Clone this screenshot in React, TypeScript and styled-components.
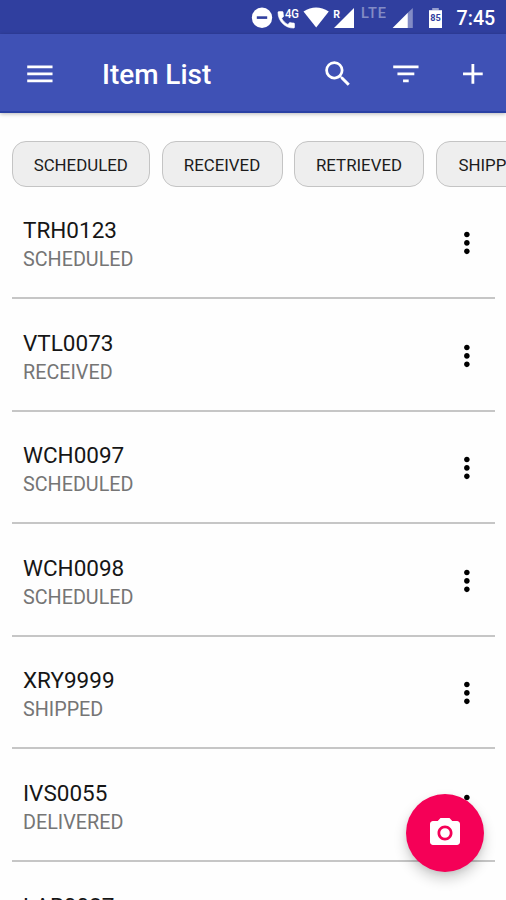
import React from "react";
import styled, { createGlobalStyle } from "styled-components";

const GlobalStyle = createGlobalStyle`
  *, *::before, *::after { box-sizing: border-box; }
  html, body { margin: 0; height: 100%; overflow: hidden; background: #fefefe; }
  body { font-family: Roboto, "Liberation Sans", sans-serif; }
  button { font: inherit; border: 0; padding: 0; margin: 0; background: none; color: inherit; }
`;

const Screen = styled.div`
  position: relative;
  display: flex;
  flex-direction: column;
  width: 506px;
  height: 900px;
  overflow: hidden;
  background: #fefefe;
`;

const StatusBar = styled.div`
  flex: none;
  height: 34px;
  background: #303f9f;
  color: #fff;
  display: flex;
  justify-content: flex-end;
`;

const StatusIcons = styled.svg`
  display: block;
  width: 206px;
  height: 34px;
  font-family: Roboto, sans-serif;
`;

const Clock = styled.span`
  width: 50px;
  padding-left: 0.5px;
  font-size: 19.7px;
  font-weight: 500;
  line-height: 37px;
  white-space: nowrap;
`;

const AppBar = styled.header`
  flex: none;
  height: 79px;
  padding-top: 2px;
  display: flex;
  align-items: center;
  background: #3f51b5;
  border-bottom: 2px solid #2a41a4;
  box-shadow: 0 1px 4px rgba(0, 0, 0, 0.28);
  color: #fff;
  z-index: 1;
`;

const IconButton = styled.button<{ $width?: number }>`
  flex: none;
  width: ${({ $width }) => $width ?? 67.5}px;
  height: 67px;
  display: flex;
  align-items: center;
  justify-content: center;
`;

const Actions = styled.div`
  flex: none;
  display: flex;
  margin-right: -0.8px;
`;

const Icon = styled.svg<{ $size?: number }>`
  display: block;
  width: ${({ $size }) => $size ?? 33.75}px;
  height: ${({ $size }) => $size ?? 33.75}px;
  fill: currentColor;
`;

const Title = styled.h1`
  flex: 1;
  margin: 0;
  padding: 3px 0 0 22px;
  font-size: 27.9px;
  font-weight: 500;
  line-height: 34px;
`;

const Chips = styled.div`
  flex: none;
  display: flex;
  gap: 11.5px;
  padding: 27.75px 0 0 11.5px;
`;

const Chip = styled.button<{ $width: number }>`
  flex: none;
  width: ${({ $width }) => $width}px;
  height: 46px;
  border: 1.4px solid #c4c4c4;
  border-radius: 14px;
  background: #eee;
  color: #1c1c1c;
  font-size: 16.85px;
  line-height: 46px;
  text-align: center;
`;

const List = styled.ul`
  list-style: none;
  margin: 0;
  padding: 0 11px 0 12px;
`;

const Row = styled.li`
  height: 112.55px;
  display: flex;
  justify-content: space-between;
  border-bottom: 2px solid #c6c6c6;
`;

const RowText = styled.div`
  padding: 29.5px 0 0 11px;
`;

const Code = styled.div`
  font-size: 22.5px;
  line-height: 29px;
  color: #161616;
`;

const State = styled.div`
  font-size: 19.75px;
  line-height: 29px;
  color: #757575;
`;

const MoreButton = styled.button`
  width: 34px;
  height: 34px;
  margin: 39.2px 10.6px 0 0;
  color: #000;
`;

const Fab = styled.button`
  position: absolute;
  right: 22px;
  bottom: 28px;
  width: 78px;
  height: 78px;
  border-radius: 50%;
  background: #f50057;
  color: #fff;
  display: flex;
  align-items: center;
  justify-content: center;
  box-shadow: 0 7px 13px rgba(0, 0, 0, 0.19), 0 2px 5px rgba(0, 0, 0, 0.07);
  z-index: 2;
`;

const paths = {
  menu: "M3 18h18v-2H3v2zm0-5h18v-2H3v2zm0-7v2h18V6H3z",
  search:
    "M15.5 14h-.79l-.28-.27A6.471 6.471 0 0 0 16 9.5 6.5 6.5 0 1 0 9.5 16c1.61 0 3.09-.59 4.23-1.57l.27.28v.79l5 4.99L20.49 19l-4.99-5zm-6 0C7.01 14 5 11.99 5 9.5S7.01 5 9.5 5 14 7.01 14 9.5 11.99 14 9.5 14z",
  filter: "M10 18h4v-2h-4v2zM3 6v2h18V6H3zm3 7h12v-2H6v2z",
  add: "M19 13h-6v6h-2v-6H5v-2h6V5h2v6h6v2z",
  more: "M12 8c1.1 0 2-.9 2-2s-.9-2-2-2-2 .9-2 2 .9 2 2 2zm0 2c-1.1 0-2 .9-2 2s.9 2 2 2 2-.9 2-2-.9-2-2-2zm0 6c-1.1 0-2 .9-2 2s.9 2 2 2 2-.9 2-2-.9-2-2-2z",
  camera:
    "M12 8.8a3.2 3.2 0 1 0 0 6.4 3.2 3.2 0 0 0 0-6.4zM9 2 7.17 4H4c-1.1 0-2 .9-2 2v12c0 1.1.9 2 2 2h16c1.1 0 2-.9 2-2V6c0-1.1-.9-2-2-2h-3.17L15 2H9zm3 15c-2.76 0-5-2.24-5-5s2.24-5 5-5 5 2.24 5 5-2.24 5-5 5z",
  phone:
    "M20.01 15.38c-1.23 0-2.42-.2-3.53-.56a.977.977 0 0 0-1.01.24l-1.57 1.97c-2.83-1.35-5.48-3.9-6.89-6.83l1.95-1.66c.27-.28.35-.67.24-1.02-.37-1.11-.56-2.3-.56-3.53 0-.54-.45-.99-.99-.99H4.19C3.65 3 3 3.24 3 3.99 3 13.28 10.73 21 20.01 21c.71 0 .99-.63.99-1.18v-3.45c0-.54-.45-.99-.99-.99z",
};

const MaterialIcon = ({ name, size }: { name: keyof typeof paths; size?: number }) => (
  <Icon viewBox="0 0 24 24" $size={size} aria-hidden="true">
    <path d={paths[name]} />
  </Icon>
);

const chips = [
  { label: "SCHEDULED", width: 138.5 },
  { label: "RECEIVED", width: 121 },
  { label: "RETRIEVED", width: 130 },
  { label: "SHIPPED", width: 114.5 },
];

const items = [
  { code: "TRH0123", state: "SCHEDULED" },
  { code: "VTL0073", state: "RECEIVED" },
  { code: "WCH0097", state: "SCHEDULED" },
  { code: "WCH0098", state: "SCHEDULED" },
  { code: "XRY9999", state: "SHIPPED" },
  { code: "IVS0055", state: "DELIVERED" },
  { code: "LAR0037", state: "SCHEDULED" },
];

export default function App() {
  return (
    <Screen>
      <GlobalStyle />
      <StatusBar>
        <StatusIcons viewBox="250 0 206 34" fill="#fff" aria-hidden="true">
          <circle cx="262" cy="17.8" r="10.2" />
          <rect x="256.8" y="16.3" width="10.4" height="2.6" fill="#303f9f" />
          <g transform="translate(275.2 8.8) scale(.92)" stroke="#fff" strokeWidth=".6">
            <path d={paths.phone} />
          </g>
          <text x="285" y="17.6" fontSize="12.5" fontWeight="500" textLength="14" lengthAdjust="spacingAndGlyphs">4G</text>
          <path d="M303.5 11.4Q316 3.6 328.8 11.4L316.2 27.4z" />
          <text x="333.2" y="18" fontSize="11.5" fontWeight="700" textLength="6.8" lengthAdjust="spacingAndGlyphs">R</text>
          <path d="M354 8v20h-20z" />
          <text x="361" y="18.4" fontSize="14.5" fontWeight="500" opacity=".4" textLength="25">LTE</text>
          <path d="M407.8 12.8L412.8 8v20h-5z" opacity=".4" />
          <path d="M407.8 12.8v15.2h-15.2z" />
          <path d="M432.2 8h6.6v2.2h-6.6z" opacity=".5" />
          <path d="M429 10.2h13v17.8h-13z" />
          <text x="435.5" y="21.2" fontSize="9.2" fontWeight="700" textAnchor="middle" fill="#303f9f">85</text>
        </StatusIcons>
        <Clock>7:45</Clock>
      </StatusBar>
      <AppBar>
        <IconButton $width={80} aria-label="Menu"><MaterialIcon name="menu" /></IconButton>
        <Title>Item List</Title>
        <Actions>
          <IconButton aria-label="Search"><MaterialIcon name="search" /></IconButton>
          <IconButton aria-label="Filter"><MaterialIcon name="filter" /></IconButton>
          <IconButton aria-label="Add"><MaterialIcon name="add" /></IconButton>
        </Actions>
      </AppBar>
      <Chips>
        {chips.map((c) => (
          <Chip key={c.label} $width={c.width}>{c.label}</Chip>
        ))}
      </Chips>
      <List>
        {items.map((item) => (
          <Row key={item.code}>
            <RowText>
              <Code>{item.code}</Code>
              <State>{item.state}</State>
            </RowText>
            <MoreButton aria-label="More"><MaterialIcon name="more" /></MoreButton>
          </Row>
        ))}
      </List>
      <Fab aria-label="Take photo"><MaterialIcon name="camera" size={36} /></Fab>
    </Screen>
  );
}
